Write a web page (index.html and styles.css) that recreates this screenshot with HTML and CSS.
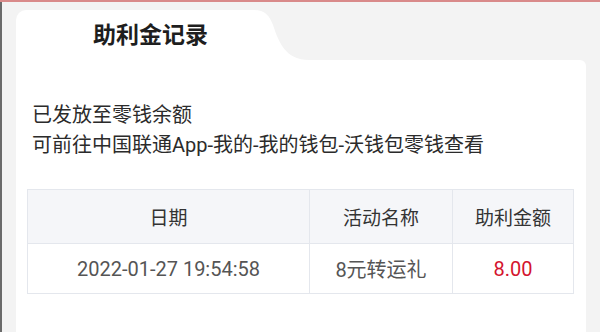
FILE: index.html
```
<!DOCTYPE html>
<html lang="zh">
<head>
    <meta charset="UTF-8">
    <title>助利金记录</title>
    <link rel="stylesheet" href="styles.css">
</head>
<body>
    <div class="top-line"></div>
    <div class="page">
        <div class="card-head">
            <div class="tab">助利金记录</div>
            <svg class="tab-curve" width="60" height="50" viewBox="0 0 60 50">
                <path d="M0 0 C12 0 16 5 20 15 C26 33 33 50 56 50 L0 50 Z" fill="#ffffff"/>
            </svg>
        </div>
        <div class="card">
            <div class="notice">
                <p>已发放至零钱余额</p>
                <p>可前往中国联通App-我的-我的钱包-沃钱包零钱查看</p>
            </div>
            <table class="record-table">
                <tr>
                    <th class="col-date">日期</th>
                    <th class="col-name">活动名称</th>
                    <th>助利金额</th>
                </tr>
                <tr>
                    <td>2022-01-27 19:54:58</td>
                    <td>8元转运礼</td>
                    <td class="amount">8.00</td>
                </tr>
            </table>
        </div>
    </div>
</body>
</html>
```

FILE: styles.css
```
body {
    margin: 0;
    background: #f3f3f3;
    font-family: "Roboto", "Noto Sans CJK SC", sans-serif;
    color: #333;
    height: 332px;
    overflow: hidden;
}

.top-line {
    height: 2px;
    background: #d98a8a;
}

.page {
    border-left: 2px solid #6a6a6a;
    padding: 8px 14px 0 14px;
    height: 330px;
    box-sizing: border-box;
}

.card-head {
    display: flex;
    height: 50px;
}

.tab {
    width: 237px;
    background: #fff;
    border-top-left-radius: 10px;
    box-sizing: border-box;
    padding: 10px 0 0 77px;
    font-size: 23px;
    font-weight: bold;
    color: #1e1e1e;
    line-height: 27px;
    font-family: "Noto Sans CJK SC", sans-serif;
}

.tab-curve {
    display: block;
}

.card {
    background: #fff;
    border-top-right-radius: 6px;
    padding: 40px 12px 0 11px;
    height: 232px;
}

.notice p {
    margin: 0;
    padding-left: 5px;
    font-size: 20px;
    line-height: 30px;
    color: #2b2b2b;
}

.record-table {
    margin-top: 29px;
    width: 100%;
    border-collapse: collapse;
    font-size: 20px;
}

.record-table th,
.record-table td {
    border: 1px solid #e4e7ed;
    text-align: center;
    padding: 0;
}

.record-table th {
    background: #f5f6f9;
    height: 53px;
    font-weight: normal;
    font-size: 19px;
    color: #333;
}

.record-table td {
    height: 49px;
    color: #555;
}

.col-date { width: 281px; }
.col-name { width: 142px; }

.record-table .amount {
    color: #d4142e;
}
```
